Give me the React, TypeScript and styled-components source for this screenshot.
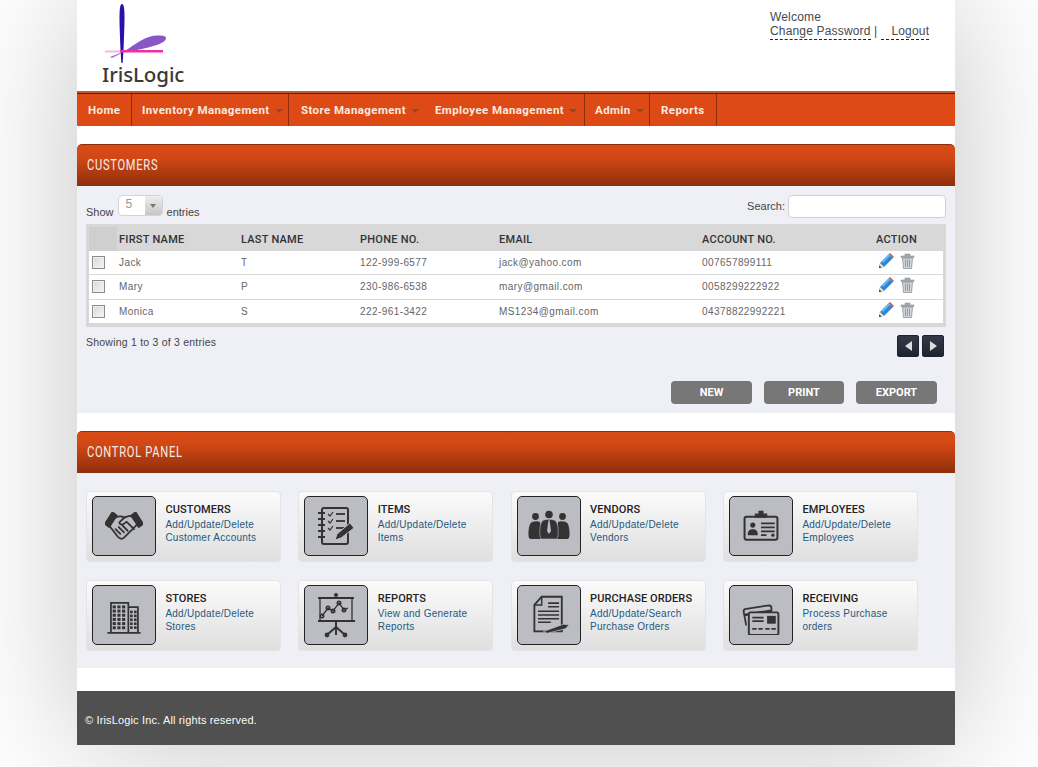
import React from 'react';
import styled, { createGlobalStyle } from 'styled-components';

const Global = createGlobalStyle`
  html, body { margin: 0; padding: 0; height: 767px; overflow: hidden; background: #fff; }
  body { font-family: "Liberation Sans", Arial, sans-serif; }
  * { box-sizing: border-box; }
`;

const Page = styled.div`
  width: 878px; height: 745px; margin-left: 77px; background: #fff;
  box-shadow: 0 0 130px rgba(0,0,0,.24);
  display: flex; flex-direction: column;
`;
const Header = styled.header`
  height: 91px; display: flex; justify-content: space-between; background: #fff;
`;
const Logo = styled.div`
  margin-left: 25px; padding-top: 3px; width: 90px; color: #3a3a3a;
  svg { display: block; margin-left: 1px; }
`;
const LogoText = styled.div`
  font: 500 20.5px/24px "Noto Sans", sans-serif; margin-top: -1px; letter-spacing: -.1px; white-space: nowrap;
`;
const UserBox = styled.div`
  width: 185px; padding-top: 10px; font-size: 12px; line-height: 14px; color: #444a55; letter-spacing: .17px;
`;
const UserLink = styled.a`
  border-bottom: 1px dashed #222; padding-bottom: 1px; color: #444a55;
`;
const Nav = styled.nav`
  height: 35px; display: flex; background: #de4a15;
  border-top: 2px solid #b9603f; box-shadow: inset 0 1px 0 #5e1d04;
`;
const NavItem = styled.div<{ $w: number; $pad: number; $line?: boolean }>`
  width: ${p => p.$w}px; padding-left: ${p => p.$pad}px; position: relative; display: flex; align-items: center; margin-top: 1px;
  font: 700 11.5px "Roboto", sans-serif; letter-spacing: .4px; color: #fbe9df; white-space: nowrap;
  border-right: ${p => p.$line ? '1px solid #8d2c08' : '0'};
`;
const Caret = styled.i`
  width: 0; height: 0; margin-left: 5px; margin-top: 2px; border: 4px solid transparent; border-top: 4px solid #8b4a30; border-bottom: 0;
`;
const PanelHead = styled.div`
  height: 42px; margin-top: 18px; padding: 0 0 1px 10px; display: flex; align-items: center;
  border-radius: 5px 5px 0 0; border-top: 1px solid #8e2f0c;
  background: linear-gradient(#d84b16 0%, #d24814 30%, #8e2f0c 100%);
`;
const PanelTitle = styled.span`
  display: inline-block; transform: scaleX(.74); transform-origin: left center; white-space: nowrap;
  color: #f6ece6; font: 400 15px "Roboto", sans-serif; letter-spacing: 1px;
`;
const PanelBody = styled.section<{ $h: number }>`
  height: ${p => p.$h}px; background: #efeff6; padding: 9px;
`;
const Toolbar = styled.div`
  display: flex; justify-content: space-between; height: 29px; font-size: 11px; color: #444;
`;
const ShowBox = styled.div` display: flex; align-items: flex-end; gap: 4px; height: 24px; line-height: 13px; `;
const Select = styled.div`
  width: 45px; height: 21px; border: 1px solid #d4d4d4; border-radius: 4px; background: #fff; display: flex; overflow: hidden;
  color: #999; font-size: 12px; align-self: flex-start;
`;
const SelVal = styled.span` flex: 1; padding: 2px 0 0 7px; `;
const SelBtn = styled.span`
  width: 17px; background: linear-gradient(#eee, #c6c6c6); display: flex; align-items: center; justify-content: center;
`;
const SelArrow = styled.i` border: 3.5px solid transparent; border-top: 4px solid #777; border-bottom: 0; `;
const SearchBox = styled.label` display: flex; gap: 3px; align-items: flex-start; line-height: 22px; `;
const SearchInput = styled.input`
  width: 158px; height: 23px; border: 1px solid #d2d2d2; border-radius: 4px; background: #fff; outline: 0;
`;
const TableWrap = styled.div` background: #d8d8d8; padding: 3px 3px 4px; height: 103px; `;
const Table = styled.table`
  width: 854px; table-layout: fixed; border-collapse: collapse; font-size: 10px;
`;
const Th = styled.th<{ $shade?: boolean }>`
  height: 24px; padding: 1px 0 0 2px; text-align: left; font: 500 11px "Roboto", sans-serif; letter-spacing: .25px; color: #333;
  background: ${p => p.$shade ? '#cfcfcf' : '#d8d8d8'};
`;
const Tr = styled.tr<{ $h: number }>`
  height: ${p => p.$h}px; background: #fff; border-bottom: 1px solid #d8d8d8;
  &:last-child { border-bottom: 0; }
`;
const Td = styled.td`
  padding: 0 0 0 2px; color: #666; letter-spacing: .42px; vertical-align: middle;
`;
const CheckCell = styled.td` padding: 0; vertical-align: middle; `;
const ActionCell = styled.td` padding: 0 0 3px 4px; vertical-align: middle; `;
const Check = styled.span`
  display: block; width: 13px; height: 13px; margin: 0 0 0 3px; border: 1px solid #8c8c8c; background: linear-gradient(135deg, #d6d6d6, #f8f8f8);
  box-shadow: inset 0 0 0 1px #eee;
`;
const Actions = styled.div` display: flex; gap: 6px; align-items: center; `;
const Below = styled.div`
  display: flex; justify-content: space-between; height: 54px; padding: 9px 2px 0 0; font-size: 10.5px; color: #444; letter-spacing: .22px;
`;
const Pager = styled.div` display: flex; gap: 3px; margin-top: -1px; align-self: flex-start; `;
const PageBtn = styled.button`
  width: 22px; height: 22px; padding: 0; border: 1px solid #1d2430; border-radius: 2px; background: linear-gradient(#333a47, #1f2530);
  display: flex; align-items: center; justify-content: center;
`;
const Tri = styled.i<{ $left?: boolean }>`
  border: 5px solid transparent; border-top-width: 5.5px; border-bottom-width: 5.5px;
  ${p => p.$left ? 'border-right: 7px solid #ddd; border-left: 0;' : 'border-left: 7px solid #ddd; border-right: 0;'}
`;
const Buttons = styled.div` display: flex; gap: 12px; padding-left: 585px; `;
const Btn = styled.button<{ $w: number }>`
  width: ${p => p.$w}px; height: 23px; border: 0; border-radius: 4px; background: #777; color: #fff; font: 700 11px "Roboto", sans-serif; padding: 0;
`;
const Grid = styled.div`
  display: grid; grid-template-columns: repeat(4, 195px); column-gap: 17.33px; row-gap: 17.6px; padding: 9px 0 0 0;
`;
const Card = styled.div`
  height: 71px; padding: 4px 5px 5px 5px; display: flex; gap: 9.4px; border: 1px solid #e4e4e4; border-radius: 4px;
  background: linear-gradient(#fbfbfb, #dfdfdf);
`;
const IconBox = styled.div`
  width: 64px; height: 60px; flex: none; border: 1px solid #222; border-radius: 5px; background: #bcbdc2;
  display: flex; align-items: center; justify-content: center; color: #333;
`;
const CardText = styled.div` padding-top: 7px; `;
const CardTitle = styled.div` font: 500 11px/14px "Roboto", sans-serif; letter-spacing: .1px; color: #222; margin-bottom: 1px; white-space: nowrap; `;
const CardSub = styled.div` font-size: 10px; line-height: 13px; color: #1f5880; letter-spacing: .25px; white-space: pre-line; `;
const Footer = styled.footer`
  height: 54px; margin-top: 23px; background: #505050; color: #fafafa; font-size: 11px; letter-spacing: .15px; padding: 23px 0 0 8px; line-height: 13px;
`;

const ic = { width: 46, height: 46, viewBox: '0 0 46 46', fill: 'none', stroke: '#333', strokeWidth: 1.6 } as const;

const HandshakeIcon = () => (
  <svg width="38" height="28" viewBox="0 0 36 26" fill="none" stroke="#333" strokeWidth="1.7" strokeLinejoin="round" strokeLinecap="round">
    <path d="M7 0l4 3L4 14l-4-3zM29 0l-4 3 7 11 4-3z" fill="#333" />
    <path d="M10 5c3-1.500 6-1.500 8 0l5-1.500c1 0 2 0 3 1L31 11 24 18l-6 6c-2 2-4 1-6-1L5 14" />
    <path d="M19 4.500l-5.500 5c0 2 3 3 5 1l2-1.500 7 7" />
    <path d="M10 16l4.500 4.500M13 14l5 5M16.500 12.500l5 5" />
  </svg>
);
const ItemsIcon = () => (
  <svg {...ic}>
    <rect x="9" y="5" width="26" height="36" rx="2" strokeWidth="2" />
    {[10, 16, 22, 28, 34].map(y => <path key={y} d={`M5 ${y}h7`} strokeWidth="2" />)}
    {[11, 18, 25].map(y => <g key={y}><path d={`M15 ${y}l2 2 3-4`} strokeWidth="1.2" /><path d={`M23 ${y}h9`} strokeWidth="1.8" /></g>)}
    <path d="M22 37l2-6 13-11 4 5-13 10z" fill="#333" stroke="#bcbdc2" strokeWidth="1" />
  </svg>
);
const VendorsIcon = () => (
  <svg width="46" height="46" viewBox="0 0 46 46" fill="#333">
    <circle cx="9.500" cy="13.500" r="3.400" /><circle cx="23" cy="11.500" r="3.800" /><circle cx="36.500" cy="13.500" r="3.400" />
    <path d="M3 35c-1-2-1-14 3-16 3-1 6-1 8 0l2 17H6c-1 0-2 0-3-1z" />
    <path d="M43 35c1-2 1-14-3-16-3-1-6-1-8 0l-2 17h10c1 0 2 0 3-1z" />
    <path d="M15 36c-2-3-2-18 3-19 3-1 7-1 10 0 5 1 5 16 3 19z" stroke="#bcbdc2" strokeWidth=".6" />
    <path d="M22.500 17h1l1.500 11-2 3-2-3z" fill="#bcbdc2" />
  </svg>
);
const EmployeesIcon = () => (
  <svg {...ic} width={42} height={42}>
    <rect x="5" y="13" width="36" height="25" rx="2" strokeWidth="2.200" />
    <path d="M17 13v-3h4v-3h4v3h4v3z" fill="#333" />
    <circle cx="14" cy="22" r="2.800" fill="#333" stroke="none" />
    <path d="M8.500 33c0-5 2-6.500 5.500-6.500s5.500 1.500 5.500 6.500z" fill="#333" stroke="none" />
    <path d="M23 20h15M23 24.500h15M23 29h15M23 33h6" strokeWidth="1.900" />
    <circle cx="36" cy="33" r="1.800" fill="#333" stroke="none" />
  </svg>
);
const StoresIcon = () => {
  const cells: React.ReactNode[] = [];
  [0, 1, 2, 3, 4, 5].forEach(r => [0, 1, 2].forEach(c => cells.push(<rect key={`a${r}${c}`} x={10 + c * 5.400} y={11 + r * 4.800} width="3.600" height="3.400" fill="#333" stroke="none" />)));
  [0, 1, 2, 3, 4].forEach(r => [0, 1].forEach(c => cells.push(<rect key={`b${r}${c}`} x={30 + c * 4.500} y={17 + r * 4.500} width="3" height="3" fill="#333" stroke="none" />)));
  return (
    <svg {...ic} width={40} height={40} viewBox="0 -1 46 46" strokeWidth={2}>
      <path d="M8 42V8h20v34M28 13h11v29M4 42.500h38" />
      {cells}
    </svg>
  );
};
const ReportsIcon = () => (
  <svg {...ic}>
    <path d="M5 6h36M5 29h37" strokeWidth="2" />
    <path d="M7 6v23M39 6v23" strokeWidth="1.300" />
    <path d="M9 24l6-8 5 3 6-8 5 7 4-2" strokeWidth="1.300" />
    {[[9, 24], [15, 16], [20, 19], [26, 11], [31, 18]].map(([x, y]) => <circle key={x} cx={x} cy={y} r="1.700" />)}
    <path d="M23 29v6l-8 7M23 35l8 7M23 29v14" strokeWidth="2" />
    <circle cx="14" cy="43" r="1.600" fill="#333" /><circle cx="32" cy="43" r="1.600" fill="#333" /><circle cx="23" cy="3" r="1.200" fill="#333" />
  </svg>
);
const OrdersIcon = () => (
  <svg {...ic} width={42} height={42}>
    <path d="M15 3h22v38H7V12z" strokeWidth="2" />
    <path d="M15 3v9H7" strokeWidth="1.600" />
    <path d="M22 10h12M22 14h12M11 19h23M11 23h23M11 27h23M11 31h14" strokeWidth="1.700" />
    <path d="M17 41l22-8 6 1-4 4-20 5z" fill="#333" stroke="#bcbdc2" strokeWidth=".8" />
  </svg>
);
const ReceivingIcon = () => (
  <svg {...ic} width={40} height={40} viewBox="0 -5 46 46" strokeWidth={2}>
    <path d="M6 30L3 14c0-2 1-3 3-3l26-4c2 0 3 1 3 3v4" />
    <path d="M4 18l31-5" strokeWidth="2.800" />
    <rect x="9" y="15" width="34" height="26" rx="2" fill="#bcbdc2" strokeWidth="2.200" />
    <rect x="30" y="19" width="10" height="9" fill="#333" stroke="none" />
    <path d="M13 21h13M13 25h13M13 34h5M20 34h5M28 34h5M35 34h5" strokeWidth="1.900" />
  </svg>
);

const Pencil = () => (
  <svg width="16" height="16" viewBox="0 0 16 16">
    <path d="M1 15l1-5L11 1l4 4-9 9z" fill="#2f86d6" />
    <path d="M3.500 8.500L11 1l1.500 1.500L5 10z" fill="#6db5ef" />
    <path d="M1 15l1-5 4 4z" fill="#f4e7c8" />
    <path d="M1 15l.5-2.500L3.500 14.500z" fill="#222" />
    <path d="M11 1l1-1 4 4-1 1z" fill="#c54b4b" />
  </svg>
);
const Trash = () => (
  <svg width="15" height="16" viewBox="0 0 15 16">
    <path d="M1 3h13v1.500H1zM5 3V1h5v2" fill="#a9b0b5" stroke="#8a9196" strokeWidth=".6" />
    <path d="M2.500 5h10l-1 10.500h-8z" fill="#d2d6d8" stroke="#7f878c" strokeWidth=".7" />
    <path d="M5.500 6.500v7.500M7.500 6.500v7.500M9.500 6.500v7.500" stroke="#8d9499" strokeWidth=".9" />
  </svg>
);

const rows = [
  { h: 23, f: 'Jack', l: 'T', p: '122-999-6577', e: 'jack@yahoo.com', a: '007657899111' },
  { h: 25, f: 'Mary', l: 'P', p: '230-986-6538', e: 'mary@gmail.com', a: '0058299222922' },
  { h: 24, f: 'Monica', l: 'S', p: '222-961-3422', e: 'MS1234@gmail.com', a: '04378822992221' },
];
const cards = [
  { t: 'CUSTOMERS', s: 'Add/Update/Delete\nCustomer Accounts', i: <HandshakeIcon /> },
  { t: 'ITEMS', s: 'Add/Update/Delete\nItems', i: <ItemsIcon /> },
  { t: 'VENDORS', s: 'Add/Update/Delete\nVendors', i: <VendorsIcon /> },
  { t: 'EMPLOYEES', s: 'Add/Update/Delete\nEmployees', i: <EmployeesIcon /> },
  { t: 'STORES', s: 'Add/Update/Delete\nStores', i: <StoresIcon /> },
  { t: 'REPORTS', s: 'View and Generate\nReports', i: <ReportsIcon /> },
  { t: 'PURCHASE ORDERS', s: 'Add/Update/Search\nPurchase Orders', i: <OrdersIcon /> },
  { t: 'RECEIVING', s: 'Process Purchase\norders', i: <ReceivingIcon /> },
];
const navs = [
  { t: 'Home', w: 55, p: 11, line: true },
  { t: 'Inventory Management', w: 157, p: 10, line: true, c: true },
  { t: 'Store Management', w: 134, p: 12, c: true },
  { t: 'Employee Management', w: 162, p: 12, line: true, c: true },
  { t: 'Admin', w: 65, p: 10, line: true, c: true },
  { t: 'Reports', w: 67, p: 11, line: true },
];
const cols = [28, 122, 119, 139, 203, 174, 69];

export default function App() {
  return (
    <Page>
      <Global />
      <Header>
        <Logo>
          <svg width="70" height="60" viewBox="0 0 70 60">
            <path d="M19 1c2 0 2.500 6 2.500 14S20.500 52 19.500 61h-1C17.500 52 16.500 23 16.500 15S17 1 19 1z" fill="#2a0fa8" />
            <path d="M22 48c7-4 14-11 24-14 7-2 17-2 17 1 0 5-12 8-20 10-7 2-15 3-21 3z" fill="#8a55c4" />
            <path d="M2 47.500h15v2H2z" fill="#f6b7e0" />
            <path d="M17 47h43v2.500H17z" fill="#ee2fa8" />
            <path d="M7 54l10-4v1l-8 4z" fill="#9a78c8" />
          </svg>
          <LogoText>IrisLogic</LogoText>
        </Logo>
        <UserBox>
          <div>Welcome</div>
          <div><UserLink>Change Password</UserLink> |&nbsp;<UserLink>&nbsp;&nbsp;&nbsp;Logout</UserLink></div>
        </UserBox>
      </Header>
      <Nav>
        {navs.map(n => (
          <NavItem key={n.t} $w={n.w} $pad={n.p} $line={n.line}>{n.t}{n.c && <Caret />}</NavItem>
        ))}
      </Nav>
      <PanelHead><PanelTitle>CUSTOMERS</PanelTitle></PanelHead>
      <PanelBody $h={227}>
        <Toolbar>
          <ShowBox>Show <Select><SelVal>5</SelVal><SelBtn><SelArrow /></SelBtn></Select> entries</ShowBox>
          <SearchBox>Search: <SearchInput /></SearchBox>
        </Toolbar>
        <TableWrap>
          <Table>
            <colgroup>{cols.map((c, i) => <col key={i} width={c} />)}</colgroup>
            <thead>
              <tr>
                <Th $shade />
                <Th>FIRST NAME</Th><Th>LAST NAME</Th><Th>PHONE NO.</Th><Th>EMAIL</Th><Th>ACCOUNT NO.</Th><Th>ACTION</Th>
              </tr>
            </thead>
            <tbody>
              {rows.map(r => (
                <Tr key={r.f} $h={r.h}>
                  <CheckCell><Check /></CheckCell>
                  <Td>{r.f}</Td><Td>{r.l}</Td><Td>{r.p}</Td><Td>{r.e}</Td><Td>{r.a}</Td>
                  <ActionCell><Actions><Pencil /><Trash /></Actions></ActionCell>
                </Tr>
              ))}
            </tbody>
          </Table>
        </TableWrap>
        <Below>
          <span>Showing 1 to 3 of 3 entries</span>
          <Pager>
            <PageBtn><Tri $left /></PageBtn>
            <PageBtn><Tri /></PageBtn>
          </Pager>
        </Below>
        <Buttons>
          <Btn $w={81}>NEW</Btn><Btn $w={80}>PRINT</Btn><Btn $w={81}>EXPORT</Btn>
        </Buttons>
      </PanelBody>
      <PanelHead><PanelTitle>CONTROL PANEL</PanelTitle></PanelHead>
      <PanelBody $h={195}>
        <Grid>
          {cards.map(c => (
            <Card key={c.t}>
              <IconBox>{c.i}</IconBox>
              <CardText>
                <CardTitle>{c.t}</CardTitle>
                <CardSub>{c.s}</CardSub>
              </CardText>
            </Card>
          ))}
        </Grid>
      </PanelBody>
      <Footer>© IrisLogic Inc. All rights reserved.</Footer>
    </Page>
  );
}
